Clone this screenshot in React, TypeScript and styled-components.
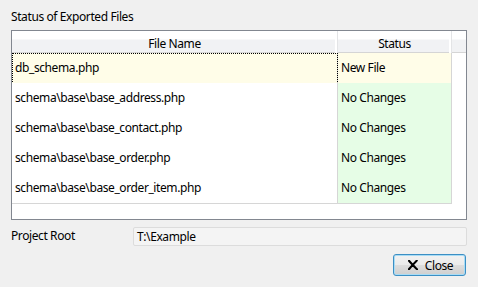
import React from "react";
import styled, { createGlobalStyle } from "styled-components";

const GlobalStyle = createGlobalStyle`
  html, body {
    margin: 0;
    padding: 0;
    background: #f0f0f0;
  }
  body {
    font-family: "Noto Sans", "Open Sans", sans-serif;
    font-size: 12px;
    letter-spacing: -0.4px;
    color: #000000;
  }
`;

type FileRow = {
  name: string;
  status: string;
  isNew?: boolean;
};

const rows: FileRow[] = [
  { name: "db_schema.php", status: "New File", isNew: true },
  { name: "schema\\base\\base_address.php", status: "No Changes" },
  { name: "schema\\base\\base_contact.php", status: "No Changes" },
  { name: "schema\\base\\base_order.php", status: "No Changes" },
  { name: "schema\\base\\base_order_item.php", status: "No Changes" },
];

const App = function App() {
  return (
    <Window>
      <GlobalStyle />
      <GroupLabel>Status of Exported Files</GroupLabel>
      <ListFrame>
        <HeaderRow>
          <HeaderCell>File Name</HeaderCell>
          <HeaderCell>Status</HeaderCell>
          <HeaderFiller />
        </HeaderRow>
        {rows.map((row, i) => (
          <Row key={row.name}>
            <NameCell $isNew={row.isNew} $focused={i === 0}>
              {row.name}
            </NameCell>
            <StatusCell $isNew={row.isNew}>{row.status}</StatusCell>
          </Row>
        ))}
      </ListFrame>
      <FieldRow>
        <FieldLabel>Project Root</FieldLabel>
        <ReadOnlyInput>T:\Example</ReadOnlyInput>
      </FieldRow>
      <ButtonRow>
        <CloseButton>
          <svg width="10" height="10" viewBox="0 0 10 10">
            <path
              d="M1 0.8 C3.5 3.5 6.5 6.8 9.2 9.4 M8.8 0.6 C6.2 3.2 3.6 6.2 0.8 9.4"
              stroke="#000"
              strokeWidth="2.1"
              fill="none"
              strokeLinecap="round"
            />
          </svg>
          Close
        </CloseButton>
      </ButtonRow>
    </Window>
  );
};
export default App;

const Window = styled.div`
  width: 478px;
  height: 287px;
  box-sizing: border-box;
  padding: 8px 11px 0 11px;
  display: flex;
  flex-direction: column;
`;

const GroupLabel = styled.div`
  height: 18px;
  line-height: 18px;
  margin-bottom: 4px;
`;

const ListFrame = styled.div`
  height: 190px;
  box-sizing: border-box;
  border: 1px solid #828790;
  background: #ffffff;
  display: flex;
  flex-direction: column;
`;

const HeaderRow = styled.div`
  display: grid;
  grid-template-columns: 326px 114px 1fr;
  height: 22px;
  box-sizing: border-box;
  border-bottom: 1px solid #d5d5d5;
  background: linear-gradient(#ffffff 0, #ffffff 8px, #f1f2f4 9px, #f1f2f4 100%);
`;

const HeaderCell = styled.div`
  text-align: center;
  line-height: 21px;
  padding-top: 2px;
  box-sizing: border-box;
  border-right: 1px solid #e3e4e6;
  box-shadow: inset -2px 0 0 #ffffff;
`;

const HeaderFiller = styled.div``;

const Row = styled.div`
  display: grid;
  grid-template-columns: 326px 114px;
  height: 30px;
  box-sizing: border-box;
`;

const Cell = styled.div`
  box-sizing: border-box;
  padding-left: 3px;
  line-height: 30px;
  border-bottom: 1px solid #d6d6d6;
  border-right: 1px solid #d6d6d6;
  white-space: nowrap;
`;

const NameCell = styled(Cell)<{ $isNew?: boolean; $focused?: boolean }>`
  background: ${(p) => (p.$isNew ? "#fffde8" : "#ffffff")};
  ${(p) =>
    p.$focused &&
    `
    outline: 1px dotted #000000;
    outline-offset: -1px;
  `}
`;

const StatusCell = styled(Cell)<{ $isNew?: boolean }>`
  background: ${(p) => (p.$isNew ? "#fffde8" : "#e6fde6")};
`;

const FieldRow = styled.div`
  display: flex;
  align-items: center;
  margin-top: 7px;
  height: 19px;
`;

const FieldLabel = styled.div`
  width: 122px;
  margin-top: -2px;
`;

const ReadOnlyInput = styled.div`
  flex: 1;
  height: 19px;
  box-sizing: border-box;
  border: 1px solid #dcdcdc;
  border-radius: 2px;
  background: #f4f4f4;
  padding-left: 3px;
  line-height: 17px;
`;

const ButtonRow = styled.div`
  display: flex;
  justify-content: flex-end;
  margin-top: 8px;
  padding-right: 1px;
`;

const CloseButton = styled.button`
  width: 73px;
  height: 22px;
  box-sizing: border-box;
  border: 1px solid #3c8fc4;
  border-radius: 3px;
  box-shadow: inset 0 0 0 1px #a9dcf5;
  background: linear-gradient(#f2f2f2 0%, #ebebeb 50%, #dddddd 51%, #cfcfcf 100%);
  font-family: "Noto Sans", "Open Sans", sans-serif;
  font-size: 12px;
  letter-spacing: -0.4px;
  color: #000000;
  display: flex;
  align-items: center;
  justify-content: center;
  gap: 7px;
  padding: 0 0 0 2px;
`;
